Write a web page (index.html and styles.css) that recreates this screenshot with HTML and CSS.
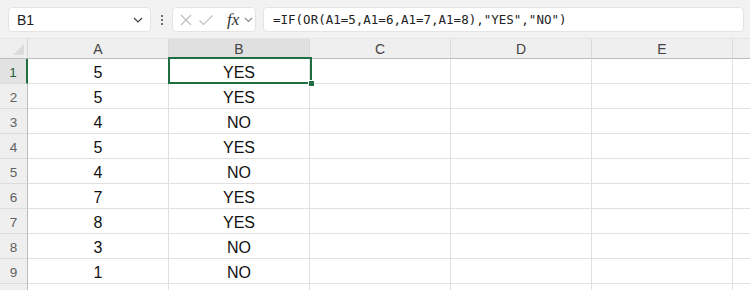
FILE: index.html
```html
<!DOCTYPE html>
<html>
<head>
<meta charset="utf-8">
<link rel="stylesheet" href="styles.css">
</head>
<body>
<div class="toolbar">
  <div class="namebox">
    <span class="name">B1</span>
    <svg class="chev" width="10" height="6" viewBox="0 0 10 6"><path d="M1 1 L5 5 L9 1" fill="none" stroke="#444" stroke-width="1.2"/></svg>
  </div>
  <div class="dots"><i></i><i></i><i></i></div>
  <div class="fxbox">
    <svg width="14" height="14" viewBox="0 0 14 14"><path d="M2 2 L12 12 M12 2 L2 12" stroke="#bdbdbd" stroke-width="1.1" fill="none"/></svg>
    <svg width="16" height="14" viewBox="0 0 16 14"><path d="M1.5 7.5 L5.5 11.5 L14.5 2.5" stroke="#bdbdbd" stroke-width="1.1" fill="none"/></svg>
    <span class="fx">fx</span>
    <svg class="chev2" width="9" height="6" viewBox="0 0 9 6"><path d="M1 1 L4.5 4.5 L8 1" fill="none" stroke="#888" stroke-width="1.1"/></svg>
  </div>
  <div class="formula">=IF(OR(A1=5,A1=6,A1=7,A1=8),"YES","NO")</div>
</div>
<div class="sheet">
  <div class="grid">
    <div class="corner"><span class="tri"></span></div>
    <div class="ch">A</div><div class="ch sel">B</div><div class="ch">C</div><div class="ch">D</div><div class="ch">E</div><div class="ch last"></div>

    <div class="rh selrow">1</div><div class="c">5</div><div class="c">YES</div><div class="c"></div><div class="c"></div><div class="c"></div><div class="c last"></div>
    <div class="rh">2</div><div class="c">5</div><div class="c">YES</div><div class="c"></div><div class="c"></div><div class="c"></div><div class="c last"></div>
    <div class="rh">3</div><div class="c">4</div><div class="c">NO</div><div class="c"></div><div class="c"></div><div class="c"></div><div class="c last"></div>
    <div class="rh">4</div><div class="c">5</div><div class="c">YES</div><div class="c"></div><div class="c"></div><div class="c"></div><div class="c last"></div>
    <div class="rh">5</div><div class="c">4</div><div class="c">NO</div><div class="c"></div><div class="c"></div><div class="c"></div><div class="c last"></div>
    <div class="rh">6</div><div class="c">7</div><div class="c">YES</div><div class="c"></div><div class="c"></div><div class="c"></div><div class="c last"></div>
    <div class="rh">7</div><div class="c">8</div><div class="c">YES</div><div class="c"></div><div class="c"></div><div class="c"></div><div class="c last"></div>
    <div class="rh">8</div><div class="c">3</div><div class="c">NO</div><div class="c"></div><div class="c"></div><div class="c"></div><div class="c last"></div>
    <div class="rh">9</div><div class="c">1</div><div class="c">NO</div><div class="c"></div><div class="c"></div><div class="c"></div><div class="c last"></div>
    <div class="rh stub"></div><div class="c stub"></div><div class="c stub"></div><div class="c stub"></div><div class="c stub"></div><div class="c stub"></div><div class="c last stub"></div>
  </div>
  <div class="selection"><span class="handle"></span></div>
</div>
</body>
</html>
```

FILE: styles.css
```css
* { box-sizing: border-box; }
html, body { margin: 0; padding: 0; }
body {
  width: 750px;
  height: 290px;
  overflow: hidden;
  background: #fff;
  font-family: "Liberation Sans", Arial, sans-serif;
}
.toolbar {
  height: 39px;
  background: #f3f2f2;
  display: flex;
  align-items: flex-start;
  padding: 7px 0 0 8px;
  border-bottom: 1px solid #e6e3e3;
}
.namebox {
  width: 143px;
  height: 25px;
  background: #fff;
  border-radius: 4px;
  border: 1px solid #e4e4e4;
  display: flex;
  align-items: center;
  justify-content: space-between;
  padding: 0 7px 0 8px;
}
.name { font-size: 14px; color: #222; }
.dots {
  width: 21px;
  height: 25px;
  display: flex;
  flex-direction: column;
  align-items: center;
  justify-content: center;
  gap: 2px;
}
.dots i { display: block; width: 2px; height: 2px; background: #444; border-radius: 1px; }
.fxbox {
  width: 84px;
  height: 25px;
  background: #fff;
  border-radius: 4px;
  border: 1px solid #e4e4e4;
  display: flex;
  align-items: center;
  padding-left: 6px;
  gap: 5px;
}
.fx {
  font-family: "Liberation Serif", "Times New Roman", serif;
  font-style: italic;
  font-size: 17px;
  color: #333;
  margin-left: 8px;
  line-height: 1;
}
.formula {
  margin-left: 7px;
  width: 481px;
  height: 25px;
  background: #fff;
  border-radius: 4px;
  border: 1px solid #e4e4e4;
  font-family: "DejaVu Sans Mono", "Liberation Mono", monospace;
  font-size: 12.5px;
  color: #222;
  line-height: 23px;
  padding-left: 9px;
}
.sheet { position: relative; }
.grid {
  display: grid;
  grid-template-columns: 28px repeat(5, 141px) 17px;
  grid-template-rows: 20px repeat(9, 25px) 6px;
}
.corner {
  background: #efefef;
  border-bottom: 1px solid #bdbdbd;
  border-right: 1px solid #d6d6d6;
  position: relative;
}
.tri {
  position: absolute;
  right: 3px;
  bottom: 3px;
  width: 0; height: 0;
  border-left: 11px solid transparent;
  border-bottom: 11px solid #dcdcdc;
}
.ch {
  background: #efefef;
  border-bottom: 1px solid #bdbdbd;
  border-right: 1px solid #dadada;
  font-size: 14px;
  color: #444;
  text-align: center;
  line-height: 19px;
  padding-top: 1px;
}
.ch.sel { background: #e0e0e0; }
.ch.last { border-right: none; }
.rh {
  background: #efefef;
  border-right: 1px solid #bdbdbd;
  border-bottom: 1px solid #dcdcdc;
  font-size: 13.5px;
  color: #616161;
  text-align: center;
  line-height: 24px;
  padding-top: 2px;
}
.rh.selrow {
  background: #e2e2e2;
  border-right: 2px solid #1e6e42;
  color: #1e5e3a;
}
.c {
  border-right: 1px solid #e1e1e1;
  border-bottom: 1px solid #e1e1e1;
  font-size: 16px;
  color: #111;
  text-align: center;
  line-height: 24px;
  padding-top: 2px;
}
.c.last { border-right: none; }
.stub { border-bottom: none; padding: 0; }
.selection {
  position: absolute;
  left: 168px;
  top: 18px;
  width: 144px;
  height: 27px;
  border: 2px solid #1e6e42;
  pointer-events: none;
}
.handle {
  position: absolute;
  right: -5px;
  bottom: -5px;
  width: 7px;
  height: 7px;
  background: #1e6e42;
  border: 1px solid #fff;
}
```
